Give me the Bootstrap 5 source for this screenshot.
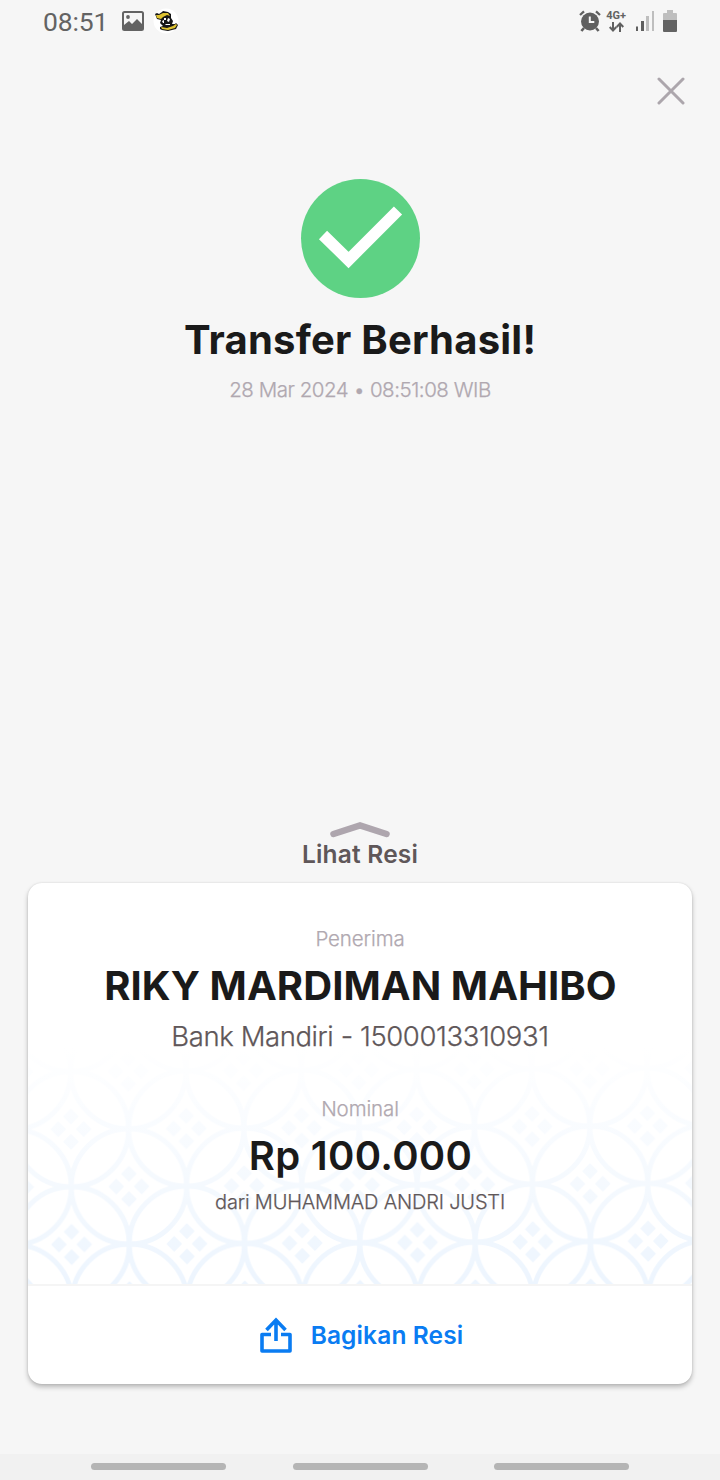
<!DOCTYPE html>
<html lang="id">
<head>
<meta charset="utf-8">
<meta name="viewport" content="width=device-width, initial-scale=1">
<title>Transfer Berhasil</title>
<link href="https://cdn.jsdelivr.net/npm/bootstrap@5.3.0/dist/css/bootstrap.min.css" rel="stylesheet">
<style>
body{background:#f6f6f6;font-family:Inter,"Liberation Sans",sans-serif;color:#1a1a1a;height:1480px;overflow:hidden}
.screen{width:720px;height:1480px}
svg{display:block;flex:none}
.status-row{height:44px;padding:0 43px 2px 43px}
.clock{font:400 26.5px/44px Roboto,sans-serif;color:#636363;width:79px;letter-spacing:-.15px;padding-top:2px}
.net{font:700 11px/12px Roboto,sans-serif;color:#636363;margin-left:5px}
.line{white-space:nowrap;text-align:center}
.t-title{font-size:40px;line-height:40px;font-weight:700;letter-spacing:.22px;margin-top:22px}
.t-date{font-size:20.5px;line-height:30px;color:#b0a8b0;font-weight:300;letter-spacing:-.46px;margin-top:15px}
.t-date,.t-label,.t-bank,.t-from{-webkit-text-stroke:.25px currentColor}
.t-peek{font-size:24.5px;line-height:30px;font-weight:600;color:#5f5759;letter-spacing:.2px}
.t-label{font-size:20.5px;line-height:30px;color:#b0a8b0;font-weight:300;letter-spacing:-.12px}
.t-name{font-size:40px;line-height:40px;font-weight:700;letter-spacing:.07px;margin-top:12px;padding-left:1px}
.t-bank{font-size:27.5px;line-height:36px;font-weight:300;color:#5f5759;letter-spacing:-.42px;margin-top:12px;margin-bottom:40px}
.t-amount{font-size:40px;line-height:40px;font-weight:600;letter-spacing:.3px;margin-top:12px;padding-left:1px}
.t-from{font-size:20px;line-height:30px;font-weight:300;color:#5f5759;letter-spacing:-.18px;margin-top:11px}
.peek{margin-top:416px}
.receipt{margin:14px 28px 0;height:501px;border-radius:14px;border:0;box-shadow:0 3px 5px rgba(0,0,0,.25),0 0 2px rgba(0,0,0,.12);overflow:hidden}
.receipt-main{height:403px;border-bottom:2px solid #f5f5f5;padding-top:41px}
.pattern{position:absolute;left:0;top:165px;z-index:0}
.receipt-main .line{position:relative}
.share{color:#0a7cf2;font-size:24.5px;font-weight:600;gap:19px;padding-left:3px;letter-spacing:.13px}
.navbtns{height:26px;background:#f1f1f1;padding:0 91px 1px}
.navbtns span{width:135px;height:7px;border-radius:4px;background:#b5b5b5}
</style>
</head>
<body>
<main class="screen d-flex flex-column">
  <div class="status-row d-flex align-items-center">
    <div class="clock">08:51</div>
    <svg width="22" height="20" viewBox="0 0 22 20"><rect x="1" y="1" width="20" height="18" rx="1.500" fill="none" stroke="#636363" stroke-width="2"/><path d="M2 14l5-4 3 3 5-5 5 5v5H2z" fill="#636363"/><circle cx="6" cy="6" r="1.900" fill="#636363"/></svg>
    <svg style="margin-left:9px" width="26" height="26" viewBox="0 0 26 26"><circle cx="13" cy="13" r="12.500" fill="#fff"/><path d="M2 6l2-1 2 1 3-2 1-1 5 1 3 2v4l2 3-1 3 3 0 1-1 2 2-2 4-8 2-6-1-2-1v-2l3-1-3-3 1-3-4-1z" fill="#161616"/><path d="M3 7l3 0 4-2 5 0 2 3-3-1-4 2-2 2-4-1zM8 19l6 1 6-2 3-2 1 1-2 3-7 2-6-1z" fill="#dfc332"/><path d="M11 10h2v2h-2zM15 10l2 1-1 3-2-1zM9 13l2-1v3h-1zM12 16h5v1h-4z" fill="#fff"/></svg>
    <svg class="ms-auto" width="22" height="22" viewBox="0 0 22 22" fill="none" stroke="#5f5f5f"><circle cx="11" cy="11.500" r="9" fill="#5f5f5f" stroke="none"/><path d="M1 5l4-3.600M21 5l-4-3.600" stroke-width="2.300"/><path d="M5 18l-2.600 3M17 18l2.600 3" stroke-width="2.600"/><path d="M10.800 6.500V12h4.500" stroke="#f6f6f6" stroke-width="2"/></svg>
    <div class="net d-flex flex-column align-items-center"><span>4G+</span>
      <svg width="15" height="10" viewBox="0 0 15 10" fill="none" stroke="#5f5f5f" stroke-width="2"><path d="M4 0v8M.7 5L4 8.500 7.300 5M11 10V2M7.700 5L11 1.500 14.300 5"/></svg></div>
    <svg style="margin-left:10px" width="18" height="20" viewBox="0 0 18 20"><path d="M0 15.500h2V20H0zM5 10h3v10H5z" fill="#5f5f5f"/><path d="M10 5h3v15h-3zM16 0h2v20h-2z" fill="#bebebe"/></svg>
    <svg style="margin-left:9px" width="14" height="22" viewBox="0 0 14 22"><path d="M4 0h6v3h3q1 0 1 1v6H0V4q0-1 1-1h3z" fill="#bebebe"/><path d="M0 10h14v11q0 1-1 1H1q-1 0-1-1z" fill="#636363"/></svg>
  </div>
  <div class="d-flex justify-content-end" style="padding:33px 34px 0 0">
    <svg width="30" height="30" viewBox="0 0 30 30" stroke="#aca6ac" stroke-width="3" stroke-linecap="round"><path d="M3 2l24 24M27 2L3 26"/></svg>
  </div>
  <section class="d-flex flex-column align-items-center" style="margin-top:72px">
    <svg width="119" height="119" viewBox="0 0 119 119"><circle cx="59.500" cy="59.500" r="59.500" fill="#5ed284"/><path d="M22 56L47.500 81 97 31.500" fill="none" stroke="#fff" stroke-width="11.600"/></svg>
    <div class="line t-title">Transfer Berhasil!</div>
    <div class="line t-date">28 Mar 2024 • 08:51:08 WIB</div>
  </section>
  <section class="peek d-flex flex-column align-items-center">
    <svg width="60" height="18" viewBox="0 0 60 18"><path d="M3.500 13L30 4.500l26.500 8.500" fill="none" stroke="#aea6ae" stroke-width="6.500" stroke-linecap="round"/></svg>
    <div class="line t-peek">Lihat Resi</div>
  </section>
  <article class="card receipt">
    <div class="receipt-main position-relative">
      <svg class="pattern" width="664" height="236" viewBox="28 1048 664 236">
        <defs>
          <pattern id="kawung" width="115.300" height="115.300" patternUnits="userSpaceOnUse" patternTransform="translate(71.300 1186.800) rotate(-.33)">
            <g fill="none" stroke="#edf5fe" stroke-width="5">
              <circle cx="0" cy="57.650" r="57.650"/><circle cx="115.300" cy="57.650" r="57.650"/><circle cx="57.650" cy="0" r="57.650"/><circle cx="57.650" cy="115.300" r="57.650"/>
            </g>
            <g fill="#edf5fe">
              <path id="q" d="M57.650-19.500l6.800 6.800-6.800 6.800-6.800-6.800zM57.650 5.900l6.800 6.800-6.800 6.800-6.800-6.800zM44.950-6.800l6.800 6.800-6.800 6.800-6.800-6.800zM70.350-6.800l6.800 6.800-6.800 6.800-6.800-6.800z" stroke="#edf5fe" stroke-width="1.600" stroke-linejoin="round"/>
              <use href="#q" y="115.300"/><use href="#q" x="-57.650" y="57.650"/><use href="#q" x="57.650" y="57.650"/>
            </g>
          </pattern>
          <linearGradient id="fade" x1="0" y1="0" x2="0" y2="1"><stop offset="0" stop-color="#fff"/><stop offset="1" stop-color="#fff" stop-opacity="0"/></linearGradient>
        </defs>
        <rect x="28" y="1048" width="664" height="236" fill="url(#kawung)"/>
        <rect x="28" y="1048" width="664" height="236" fill="url(#fade)"/>
      </svg>
      <div class="line t-label">Penerima</div>
      <div class="line t-name">RIKY MARDIMAN MAHIBO</div>
      <div class="line t-bank">Bank Mandiri - 1500013310931</div>
      <div class="line t-label">Nominal</div>
      <div class="line t-amount">Rp 100.000</div>
      <div class="line t-from">dari MUHAMMAD ANDRI JUSTI</div>
    </div>
    <div class="share flex-grow-1 d-flex align-items-center justify-content-center">
      <svg width="32" height="36" viewBox="0 0 32 36" fill="none" stroke="#0a7cf2" stroke-width="3.600"><path d="M11 17.500H2V34H30V17.500H21" stroke-linejoin="round"/><path d="M16 24V3M6.500 13L16 3l9.500 10"/></svg>
      <span>Bagikan Resi</span>
    </div>
  </article>
  <nav class="navbtns d-flex align-items-center justify-content-between mt-auto"><span></span><span></span><span></span></nav>
</main>
<script src="https://cdn.jsdelivr.net/npm/bootstrap@5.3.0/dist/js/bootstrap.bundle.min.js"></script>
</body>
</html>
